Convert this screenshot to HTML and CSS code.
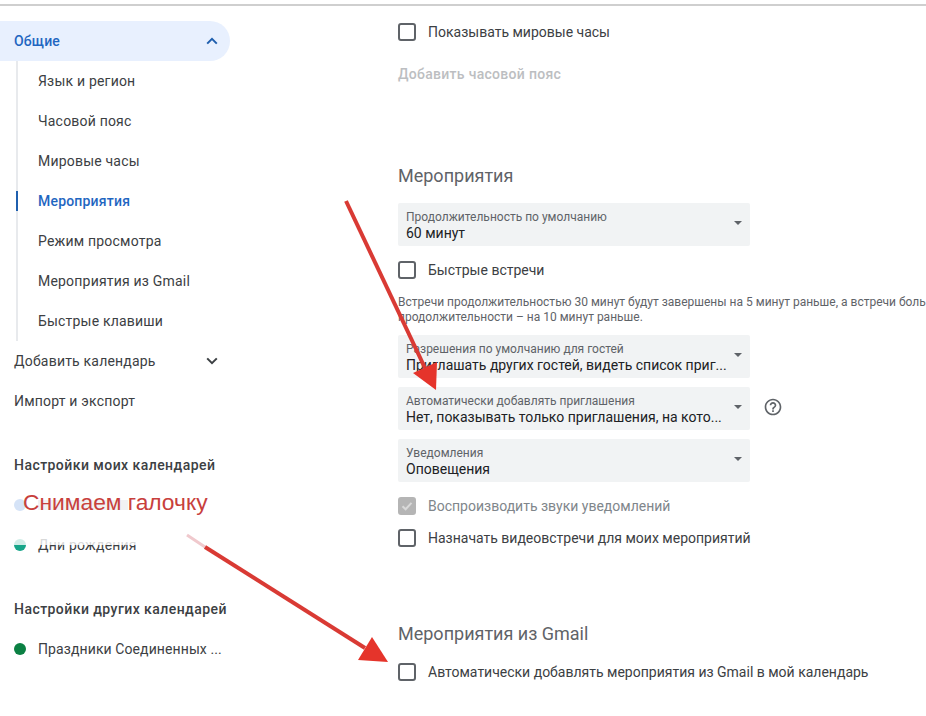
FILE: index.html
```html
<!DOCTYPE html>
<html lang="ru">
<head>
    <meta charset="UTF-8">
    <title>Настройки</title>
    <link rel="stylesheet" href="styles.css">
</head>
<body>
    <div class="page">
        <nav class="sidebar">
            <div class="nav-open">
                <span>Общие</span>
                <svg class="chev" width="12" height="8" viewBox="0 0 12 8"><path d="M1.2 6.6 6 1.8l4.8 4.8" fill="none" stroke="#1f5fae" stroke-width="2"/></svg>
            </div>
            <ul class="subnav">
                <li>Язык и регион</li>
                <li>Часовой пояс</li>
                <li>Мировые часы</li>
                <li class="current">Мероприятия</li>
                <li>Режим просмотра</li>
                <li>Мероприятия из Gmail</li>
                <li>Быстрые клавиши</li>
            </ul>
            <div class="nav-row">
                <span>Добавить календарь</span>
                <svg class="chev" width="12" height="8" viewBox="0 0 12 8"><path d="M1.2 1.4 6 6.2l4.8-4.8" fill="none" stroke="#3c4043" stroke-width="2"/></svg>
            </div>
            <div class="nav-row">Импорт и экспорт</div>
            <h4 class="nav-head">Настройки моих календарей</h4>
            <div class="cal-row"><i class="dot dot-blue"></i><i class="smudge"></i></div>
            <div class="cal-row"><i class="dot dot-teal"></i><span>Дни рождения</span></div>
            <h4 class="nav-head">Настройки других календарей</h4>
            <div class="cal-row"><i class="dot dot-green"></i><span class="cal-long">Праздники Соединенных ...</span></div>
        </nav>

        <main class="content">
            <label class="check first"><i class="box"></i>Показывать мировые часы</label>
            <div class="add-zone">Добавить часовой пояс</div>

            <h3 class="section-title">Мероприятия</h3>
            <div class="select first-select">
                <small>Продолжительность по умолчанию</small>
                <span>60 минут</span>
            </div>
            <label class="check quick"><i class="box"></i>Быстрые встречи</label>
            <p class="hint">Встречи продолжительностью 30 минут будут завершены на 5 минут раньше, а встречи большей<br>продолжительности – на 10 минут раньше.</p>
            <div class="select">
                <small>Разрешения по умолчанию для гостей</small>
                <span>Приглашать других гостей, видеть список приг...</span>
            </div>
            <div class="select-line">
                <div class="select">
                    <small>Автоматически добавлять приглашения</small>
                    <span>Нет, показывать только приглашения, на кото...</span>
                </div>
                <svg class="help" width="20" height="20" viewBox="0 0 24 24"><path fill="#5f6368" d="M11 18h2v-2h-2v2zm1-16C6.48 2 2 6.48 2 12s4.48 10 10 10 10-4.48 10-10S17.52 2 12 2zm0 18c-4.41 0-8-3.59-8-8s3.59-8 8-8 8 3.59 8 8-3.59 8-8 8zm0-14c-2.21 0-4 1.79-4 4h2c0-1.100.9-2 2-2s2 .9 2 2c0 2-3 1.750-3 5h2c0-2.250 3-2.500 3-5 0-2.210-1.790-4-4-4z"/></svg>
            </div>
            <div class="select">
                <small>Уведомления</small>
                <span>Оповещения</span>
            </div>
            <label class="check sounds disabled"><i class="box box-on"><svg width="14" height="14" viewBox="0 0 14 14"><path d="M2.500 7.200 5.600 10.300 11.500 3.900" fill="none" stroke="#d9d9d9" stroke-width="2"/></svg></i>Воспроизводить звуки уведомлений</label>
            <label class="check video"><i class="box"></i>Назначать видеовстречи для моих мероприятий</label>

            <h3 class="section-title gmail">Мероприятия из Gmail</h3>
            <label class="check gmail-check"><i class="box"></i>Автоматически добавлять мероприятия из Gmail в мой календарь</label>
        </main>
    </div>

    <!-- пометки поверх скриншота -->
    <div class="note-wash"></div>
    <div class="note">Снимаем галочку</div>
    <svg class="arrows" width="926" height="716" viewBox="0 0 926 716">
        <line x1="346" y1="201" x2="425" y2="368" stroke="#d93a34" stroke-width="4"/>
        <polygon points="436,390 413,373 437,362" fill="#e5342b"/>
        <line x1="187" y1="535" x2="205" y2="547" stroke="#f0c9cd" stroke-width="3"/>
        <line x1="205" y1="547" x2="365" y2="648" stroke="#d93a34" stroke-width="4"/>
        <polygon points="388,662 358,660 372,637" fill="#e5342b"/>
    </svg>
</body>
</html>
```

FILE: styles.css
```css
* {
    box-sizing: border-box;
}
html, body {
    margin: 0;
    height: 716px;
    overflow: hidden;
}
body {
    font-family: Roboto, Arial, sans-serif;
    font-size: 14px;
    color: #3c4043;
    background: #fff;
    position: relative;
}
.page {
    display: flex;
    height: 716px;
    border-top: 2px solid #fff;
    position: relative;
}
.page::before {
    content: "";
    position: absolute;
    left: 0;
    right: 0;
    top: 2px;
    height: 2px;
    background: #cfcfcf;
}
.sidebar {
    width: 230px;
    flex: none;
    padding-top: 19px;
    letter-spacing: .2px;
}
.nav-open {
    height: 40px;
    display: flex;
    align-items: center;
    justify-content: space-between;
    padding: 0 12px 0 14px;
    background: #e8f0fe;
    border-radius: 0 20px 20px 0;
    color: #1f66c1;
    font-weight: 500;
}
.subnav {
    list-style: none;
    margin: 0 0 0 16px;
    padding: 0;
    border-left: 2px solid #e8eaed;
}
.subnav li {
    height: 40px;
    line-height: 40px;
    padding-left: 20px;
    position: relative;
}
.subnav .current {
    color: #1f66c1;
    font-weight: 500;
}
.subnav .current::before {
    content: "";
    position: absolute;
    left: -2px;
    top: 10px;
    width: 2px;
    height: 20px;
    background: #1f5fae;
}
.nav-row {
    height: 40px;
    display: flex;
    align-items: center;
    justify-content: space-between;
    padding: 0 12px 0 14px;
}
.nav-head {
    margin: 34px 0 0 14px;
    height: 20px;
    line-height: 20px;
    font-size: 14px;
    font-weight: 500;
    letter-spacing: .45px;
}
.nav-head + .cal-row {
    margin-top: 10px;
}
.cal-row {
    height: 40px;
    display: flex;
    align-items: center;
    padding-left: 14px;
}
.cal-long {
    letter-spacing: .1px;
}
.dot {
    width: 12px;
    height: 12px;
    border-radius: 50%;
    margin-right: 12px;
}
.dot-blue {
    background: #d5e3f7;
}
.dot-teal {
    background: #17a589;
}
.dot-green {
    background: #0b8043;
}
.smudge {
    width: 90px;
    height: 10px;
    background: #f1f2f3;
}
.content {
    flex: 1;
    min-width: 0;
    padding: 19px 0 0 168px;
}
.check {
    display: flex;
    align-items: center;
    height: 22px;
    white-space: nowrap;
}
.box {
    width: 18px;
    height: 18px;
    border: 2px solid #5f6368;
    border-radius: 3px;
    margin-right: 12px;
    flex: none;
}
.box-on {
    background: #b5b5b5;
    border-color: #b5b5b5;
    display: flex;
    align-items: center;
    justify-content: center;
}
.box-on svg {
    flex: none;
}
.add-zone {
    margin-top: 21px;
    height: 20px;
    line-height: 20px;
    color: #bcbec1;
    font-weight: 500;
    letter-spacing: .3px;
}
.section-title {
    margin: 80px 0 0;
    height: 24px;
    line-height: 24px;
    font-size: 18px;
    font-weight: 400;
    color: #5f6368;
}
.select {
    width: 352px;
    height: 43px;
    margin-top: 9px;
    padding: 7px 30px 0 8px;
    background: #f1f3f4;
    border-radius: 2px;
    position: relative;
    color: #202124;
}
.first-select {
    margin-top: 15px;
}
.select::after {
    content: "";
    position: absolute;
    right: 8px;
    top: 18px;
    border: 4px solid transparent;
    border-top: 4px solid #5f6368;
    border-bottom: 0;
}
.select small {
    display: block;
    font-size: 12px;
    line-height: 15px;
    color: #5f6368;
}
.select span {
    display: block;
    line-height: 17px;
    white-space: nowrap;
}
.select-line {
    display: flex;
    align-items: flex-end;
}
.help {
    margin: 0 0 13px 13px;
}
.quick {
    margin-top: 13px;
}
.hint {
    margin: 14px 0 0;
    font-size: 12px;
    line-height: 15px;
    color: #5f6368;
    white-space: nowrap;
}
.hint + .select {
    margin-top: 10px;
}
.sounds {
    margin-top: 13px;
}
.video {
    margin-top: 10px;
}
.disabled {
    color: #80868b;
}
.gmail {
    margin-top: 73px;
}
.gmail-check {
    margin-top: 15px;
}
.note {
    position: absolute;
    left: 23px;
    top: 487px;
    font-family: "Liberation Sans", Arial, sans-serif;
    font-size: 22.8px;
    line-height: 30px;
    color: #c8403c;
}
/* белая полоса закрашивает верх строки "Дни рождения" */
.note-wash {
    position: absolute;
    left: 12px;
    top: 532px;
    width: 130px;
    height: 13px;
    background: rgba(255, 255, 255, .8);
}
.arrows {
    position: absolute;
    left: 0;
    top: 0;
}
```
